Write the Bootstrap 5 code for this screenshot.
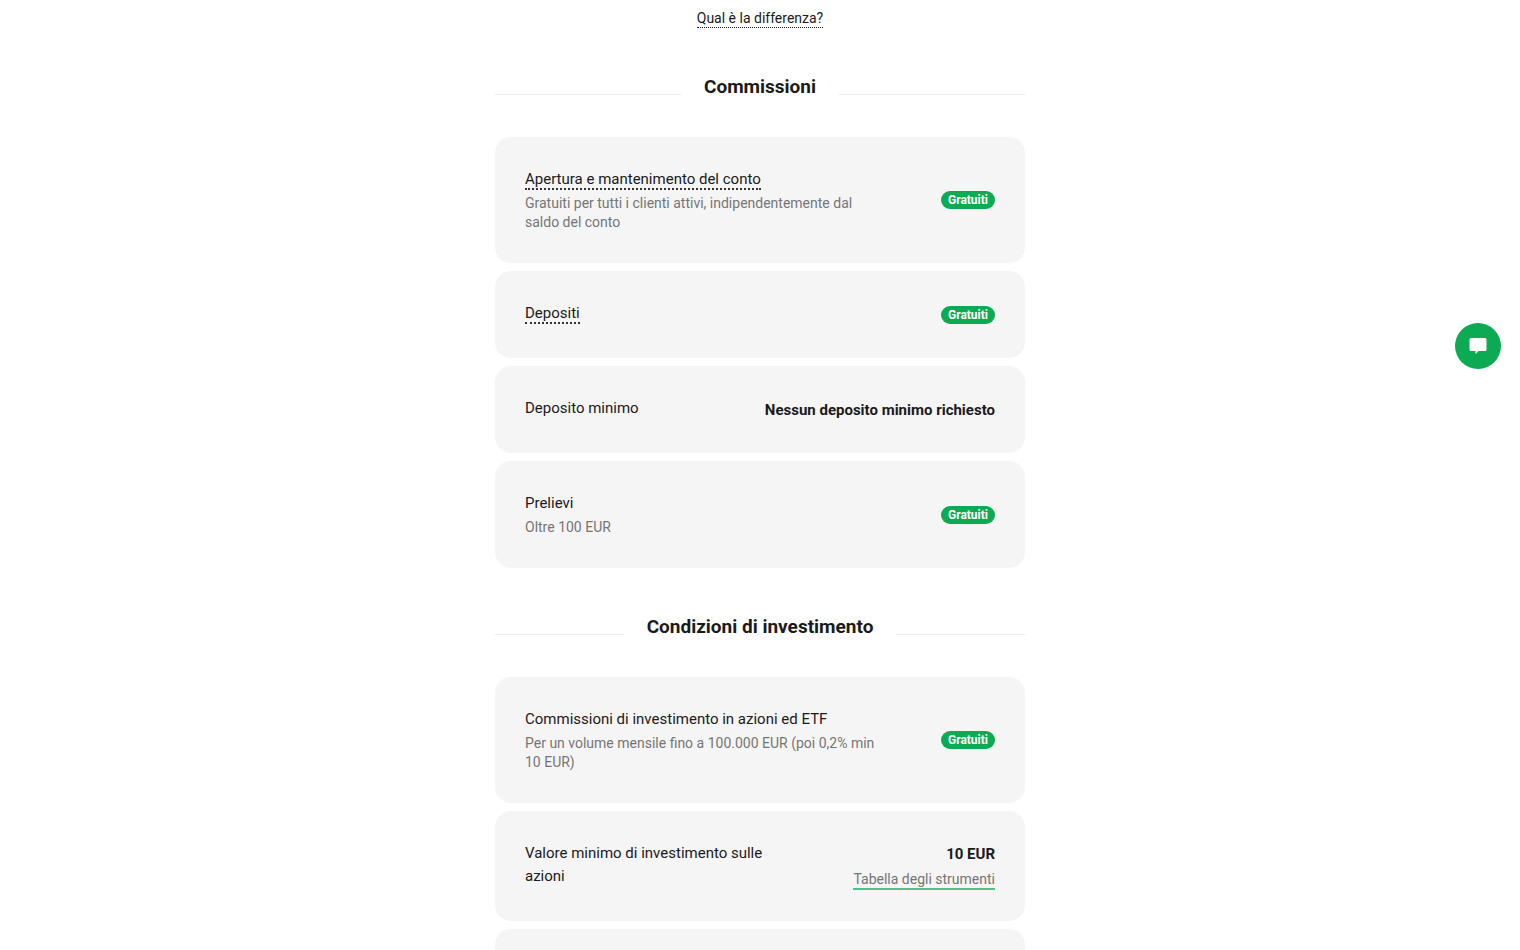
<!DOCTYPE html>
<html lang="it">
<head>
<meta charset="utf-8">
<meta name="viewport" content="width=device-width, initial-scale=1">
<title>Commissioni e condizioni di investimento</title>
<link href="https://cdn.jsdelivr.net/npm/bootstrap@5.3.0/dist/css/bootstrap.min.css" rel="stylesheet">
<style>
body{font-family:Roboto,"Liberation Sans",sans-serif;font-size:15px;line-height:24px;color:#1a1a1a}
.pricing{max-width:530px}
.difference-row{padding-top:9px}
.difference{font-size:14px;line-height:18px;color:inherit;text-decoration:none;border-bottom:1px dotted #1a1a1a}
.section-title{margin:45px 0 36px;gap:23px}
.section-title::before,.section-title::after{content:"";flex:1;height:1px;background:#ebebeb;margin-top:14px}
.section-title h2{font-size:19px;line-height:28px;font-weight:700;margin:0}
.fee{background:#f5f5f6;border-radius:16px;padding:31px 30px;gap:16px}
.fee-name{line-height:23px;margin:0}
.hint{color:inherit;text-decoration:none;border-bottom:2px dotted #333}
.fee-note{font-size:14px;line-height:19px;color:#757575;margin:3px 0 0}
.fee-text{max-width:356px;min-height:25px}
.fee-short{max-width:260px}
.free{font-size:12px;line-height:18px;padding:0 7px;font-weight:700;background:#0daa54}
.table-link{font-size:14px;line-height:18px;color:#757575;text-decoration:none;border-bottom:2px solid #56c08a;margin-top:4px}
.table-link:hover{color:#1a1a1a}
.chat,.chat:hover{background:#0daa54}
.chat{top:323px;right:19px;width:46px;height:46px}
</style>
</head>
<body>
<main class="pricing mx-auto">
<div class="difference-row d-flex justify-content-center"><a class="difference" href="#">Qual è la differenza?</a></div>
<section>
<div class="section-title d-flex align-items-center"><h2>Commissioni</h2></div>
<div class="d-grid gap-2">
<div class="fee d-flex align-items-center justify-content-between"><div class="fee-text"><p class="fee-name"><a class="hint" href="#">Apertura e mantenimento del conto</a></p><p class="fee-note">Gratuiti per tutti i clienti attivi, indipendentemente dal saldo del conto</p></div><span class="free badge rounded-pill">Gratuiti</span></div>
<div class="fee d-flex align-items-center justify-content-between"><div class="fee-text"><p class="fee-name"><a class="hint" href="#">Depositi</a></p></div><span class="free badge rounded-pill">Gratuiti</span></div>
<div class="fee d-flex align-items-center justify-content-between"><div class="fee-text"><p class="fee-name">Deposito minimo</p></div><strong>Nessun deposito minimo richiesto</strong></div>
<div class="fee d-flex align-items-center justify-content-between"><div class="fee-text"><p class="fee-name">Prelievi</p><p class="fee-note">Oltre 100 EUR</p></div><span class="free badge rounded-pill">Gratuiti</span></div>
</div>
</section>
<section>
<div class="section-title d-flex align-items-center"><h2>Condizioni di investimento</h2></div>
<div class="d-grid gap-2">
<div class="fee d-flex align-items-center justify-content-between"><div class="fee-text"><p class="fee-name">Commissioni di investimento in azioni ed ETF</p><p class="fee-note">Per un volume mensile fino a 100.000 EUR (poi 0,2% min 10 EUR)</p></div><span class="free badge rounded-pill">Gratuiti</span></div>
<div class="fee d-flex align-items-start justify-content-between"><div class="fee-text fee-short"><p class="fee-name">Valore minimo di investimento sulle azioni</p></div><div class="d-flex flex-column align-items-end"><strong>10 EUR</strong><a class="table-link" href="#">Tabella degli strumenti</a></div></div>
<div class="fee"></div>
</div>
</section>
</main>
<button type="button" class="chat btn rounded-circle position-fixed p-0 border-0 d-flex align-items-center justify-content-center" aria-label="Apri la chat"><svg width="18" height="18" viewBox="0 0 18 18" fill="#fff"><path d="M2 1h14q1.5 0 1.500 1.500v10q0 1.500-1.500 1.500H9.500L6.500 17V14H2Q.5 14 .5 12.500v-10Q.5 1 2 1z"/></svg></button>
<script src="https://cdn.jsdelivr.net/npm/bootstrap@5.3.0/dist/js/bootstrap.bundle.min.js"></script>
</body>
</html>
